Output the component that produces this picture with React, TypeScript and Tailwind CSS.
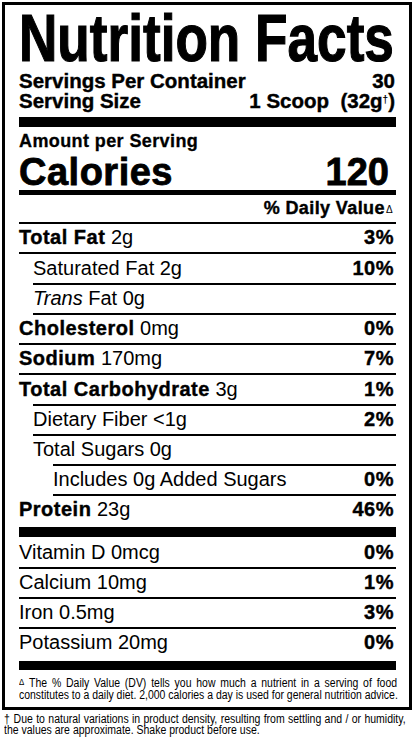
import React from "react";

const SANS = "font-['Liberation_Sans',Arial,Helvetica,sans-serif]";

type RowProps = {
  children: React.ReactNode;
  pct?: string;
  cls?: string;
};

function Row({ children, pct, cls = "h-[28px] leading-[27px]" }: RowProps) {
  return (
    <div className={`flex justify-between text-[20px] ${cls}`}>
      <div className="whitespace-nowrap">{children}</div>
      {pct ? (
        <div className="font-bold tracking-[0.5px] pr-[2px] [-webkit-text-stroke:0.4px_black]">{pct}</div>
      ) : null}
    </div>
  );
}

function Line({ cls = "" }: { cls?: string }) {
  return <div className={`h-[2px] bg-black ${cls}`} />;
}

function B({ children }: { children: React.ReactNode }) {
  return <span className="font-bold tracking-[0.5px] [-webkit-text-stroke:0.4px_black]">{children}</span>;
}

export default function App() {
  return (
    <div className={`w-[416px] h-[748px] bg-white text-black overflow-hidden ${SANS}`}>
      <div className="ml-[2px] mt-[2px] w-[410px] border-[3px] border-black pl-[14px] pr-[13px] pt-[1px] pb-[6px]">
        <div className="h-[65px] w-[377px]">
          <div className="w-[466px] origin-left scale-x-[0.805] font-bold text-[66px] leading-[65px] whitespace-nowrap [-webkit-text-stroke:1.2px_black]">
            Nutrition Facts
          </div>
        </div>
        <div className="flex justify-between text-[20.5px] leading-[20px] font-bold [-webkit-text-stroke:0.4px_black]">
          <span>Servings Per Container</span>
          <span className="pr-[1px]">30</span>
        </div>
        <div className="flex justify-between text-[20.5px] leading-[20px] font-bold [-webkit-text-stroke:0.4px_black]">
          <span>Serving Size</span>
          <span className="pr-[1px] whitespace-pre">
            1 Scoop  (32g<span className="text-[10px] align-top relative top-[-1px] [-webkit-text-stroke:0px_black]">†</span>)
          </span>
        </div>
        <div className="mt-[6px] h-[10px] bg-black" />
        <div className="mt-[4px] text-[18px] leading-[20px] font-bold tracking-[0.4px] [-webkit-text-stroke:0.3px_black]">
          Amount per Serving
        </div>
        <div className="mt-[3px] flex justify-between text-[38px] leading-[36px] font-bold h-[36px] [-webkit-text-stroke:0.8px_black]">
          <span className="tracking-[0.5px]">Calories</span>
          <span className="pr-[7px]">120</span>
        </div>
        <div className="h-[5px] bg-black" />
        <div className="h-[27px] leading-[27px] text-[18px] font-bold text-right tracking-[0.4px] pr-[3px]">
          <span className="[-webkit-text-stroke:0.4px_black]">% Daily Value</span>
          <span className="text-[10px] font-normal align-top relative top-[1px] ml-[1px]">Δ</span>
        </div>
        <Line />
        <Row pct="3%">
          <B>Total Fat</B> 2g
        </Row>
        <Line />
        <Row pct="10%" cls="h-[29px] leading-[28px] pl-[14px]">
          Saturated Fat 2g
        </Row>
        <Line cls="ml-[14px]" />
        <Row cls="h-[28px] leading-[27px] pl-[14px]">
          <i>Trans</i> Fat 0g
        </Row>
        <Line cls="ml-[14px]" />
        <Row pct="0%">
          <B>Cholesterol</B> 0mg
        </Row>
        <Line />
        <Row pct="7%">
          <B>Sodium</B> 170mg
        </Row>
        <Line />
        <Row pct="1%" cls="h-[29px] leading-[28px]">
          <B>Total Carbohydrate</B> 3g
        </Row>
        <Line cls="ml-[14px]" />
        <Row pct="2%" cls="h-[28px] leading-[27px] pl-[14px]">
          Dietary Fiber &lt;1g
        </Row>
        <Line cls="ml-[14px]" />
        <Row cls="h-[28px] leading-[27px] pl-[14px]">Total Sugars 0g</Row>
        <Line cls="ml-[34px]" />
        <Row pct="0%" cls="h-[28px] leading-[27px] pl-[34px]">
          Includes 0g Added Sugars
        </Row>
        <Line cls="ml-[34px]" />
        <Row pct="46%" cls="h-[31px] leading-[27px]">
          <B>Protein</B> 23g
        </Row>
        <div className="h-[10px] bg-black" />
        <Row pct="0%" cls="h-[30px] leading-[30px]">
          Vitamin D 0mcg
        </Row>
        <Line />
        <Row pct="1%">Calcium 10mg</Row>
        <Line />
        <Row pct="3%">Iron 0.5mg</Row>
        <Line />
        <Row pct="0%" cls="h-[32px] leading-[27px]">
          Potassium 20mg
        </Row>
        <div className="h-[9px] bg-black" />
        <div className="pt-[8px] w-[378px]">
          <div className="w-[434px] origin-left scale-x-[0.871] text-[12px] leading-[11px] whitespace-nowrap">
            <div className="text-justify [text-align-last:justify]">
              <span className="text-[9px] relative top-[-2px]">Δ</span> The % Daily Value (DV) tells you how much a nutrient in a serving of food
            </div>
            <div className="text-justify [text-align-last:justify]">
              constitutes to a daily diet. 2,000 calories a day is used for general nutrition advice.
            </div>
          </div>
        </div>
      </div>
      <div className="mt-[4px] ml-[4px] w-[402px]">
        <div className="w-[459px] origin-left scale-x-[0.875] text-[12px] leading-[10.5px] whitespace-nowrap">
          <div className="text-justify [text-align-last:justify]">
            † Due to natural variations in product density, resulting from settling and / or humidity,
          </div>
          <div>the values are approximate. Shake product before use.</div>
        </div>
      </div>
    </div>
  );
}
